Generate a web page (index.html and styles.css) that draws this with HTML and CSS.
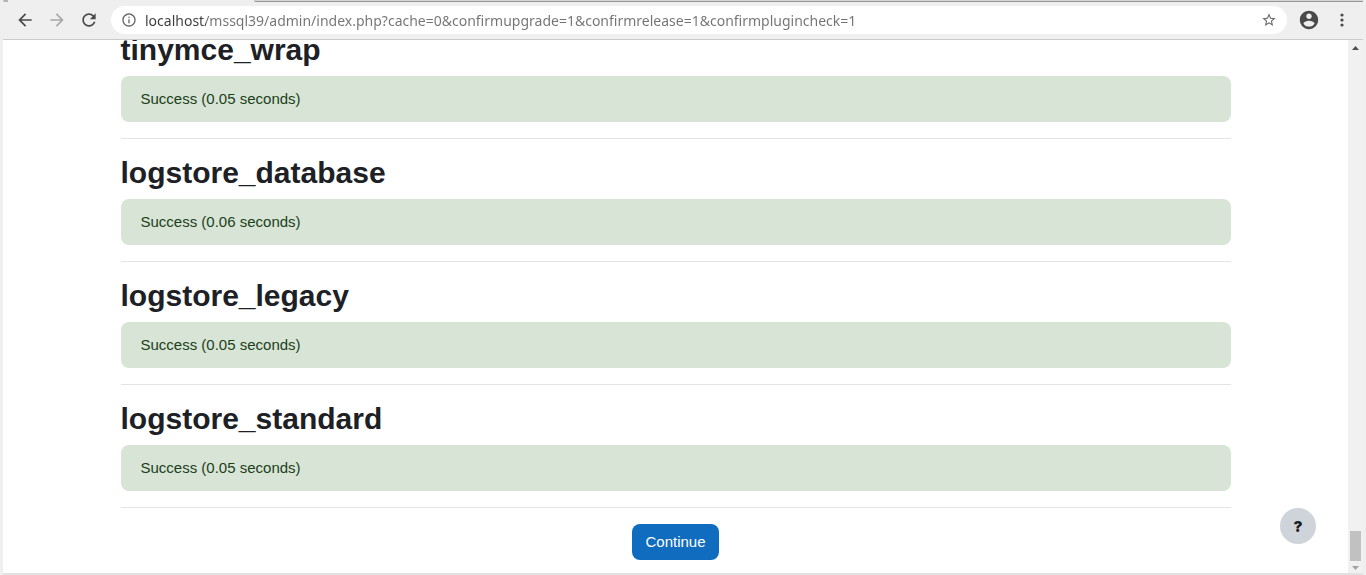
FILE: index.html
```
<!DOCTYPE html>
<html lang="en">
  <head>
    <meta charset="UTF-8" />
    <meta name="viewport" content="width=device-width, initial-scale=1.0" />
    <title>Upgrade</title>
    <link rel="stylesheet" href="styles.css">
  </head>
  <body>
    <div class="tab-strip">
      <div class="tab"></div>
      <div class="tab-rest"></div>
    </div>

    <header class="toolbar">
      <button type="button" class="nav-btn" aria-label="Back">
        <svg viewBox="0 0 24 24"><path d="M20 11H7.83l5.59-5.59L12 4l-8 8 8 8 1.41-1.41L7.83 13H20v-2z" /></svg>
      </button>
      <button type="button" class="nav-btn" aria-label="Forward" disabled>
        <svg viewBox="0 0 24 24"><path d="M12 4l-1.41 1.41L16.17 11H4v2h12.17l-5.58 5.59L12 20l8-8z" /></svg>
      </button>
      <button type="button" class="nav-btn" aria-label="Reload">
        <svg viewBox="0 0 24 24"><path d="M17.65 6.35C16.2 4.9 14.21 4 12 4c-4.42 0-7.99 3.58-7.99 8s3.57 8 7.99 8c3.73 0 6.84-2.55 7.73-6h-2.08c-.82 2.33-3.04 4-5.65 4-3.31 0-6-2.69-6-6s2.69-6 6-6c1.66 0 3.14.69 4.22 1.78L13 11h7V4l-2.35 2.35z" /></svg>
      </button>
      <div class="address-bar">
        <svg class="icon-info" viewBox="0 0 24 24"><path d="M11 17h2v-6h-2v6zm1-15C6.48 2 2 6.48 2 12s4.480 10 10 10 10-4.480 10-10S17.520 2 12 2zm0 18c-4.410 0-8-3.590-8-8s3.590-8 8-8 8 3.590 8 8-3.590 8-8 8zM11 9h2V7h-2v2z" /></svg>
        <input type="text" class="address" aria-label="Address" value="localhost/mssql39/admin/index.php?cache=0&amp;confirmupgrade=1&amp;confirmrelease=1&amp;confirmplugincheck=1" />
        <button type="button" class="star-btn" aria-label="Bookmark this page">
          <svg viewBox="0 0 24 24"><path d="M22 9.240l-7.190-.620L12 2 9.190 8.630 2 9.240l5.460 4.730L5.820 21 12 17.270 18.180 21l-1.630-7.030L22 9.240zM12 15.400l-3.760 2.270 1-4.280-3.320-2.880 4.380-.380L12 6.100l1.710 4.040 4.380.380-3.320 2.880 1 4.280L12 15.400z" /></svg>
        </button>
      </div>
      <button type="button" class="profile-btn" aria-label="Profile">
        <svg viewBox="0 0 24 24"><path d="M12 2C6.480 2 2 6.480 2 12s4.480 10 10 10 10-4.480 10-10S17.520 2 12 2zm0 3c1.660 0 3 1.340 3 3s-1.340 3-3 3-3-1.340-3-3 1.340-3 3-3zm0 14.200c-2.500 0-4.710-1.280-6-3.220.030-1.990 4-3.080 6-3.080 1.990 0 5.970 1.090 6 3.080-1.290 1.940-3.500 3.220-6 3.220z" /></svg>
      </button>
      <button type="button" class="menu-btn" aria-label="Menu">
        <svg viewBox="0 0 16 16"><circle cx="8" cy="3" r="1.600" /><circle cx="8" cy="8" r="1.600" /><circle cx="8" cy="13" r="1.600" /></svg>
      </button>
    </header>

    <div class="window">
      <main class="page">
        <div class="container">
          <section>
            <h2>tinymce_wrap</h2>
            <div class="alert">Success (0.05 seconds)</div>
          </section>
          <hr />
          <section>
            <h2>logstore_database</h2>
            <div class="alert">Success (0.06 seconds)</div>
          </section>
          <hr />
          <section>
            <h2>logstore_legacy</h2>
            <div class="alert">Success (0.05 seconds)</div>
          </section>
          <hr />
          <section>
            <h2>logstore_standard</h2>
            <div class="alert">Success (0.05 seconds)</div>
          </section>
          <hr />
          <form class="continue">
            <button type="submit" class="btn-primary">Continue</button>
          </form>
        </div>
        <button type="button" class="btn-help" aria-label="Show footer">?</button>
      </main>
      <div class="scrollbar">
        <svg class="arrow-up" viewBox="0 0 7 4"><path d="M0 4L3.500 0 7 4z" /></svg>
        <div class="thumb"></div>
        <svg class="arrow-down" viewBox="0 0 7 4"><path d="M0 0L3.500 4 7 0z" /></svg>
      </div>
    </div>
  </body>
</html>
```
FILE: styles.css
```
* {
  box-sizing: border-box;
}

body {
  margin: 0;
  height: 100vh;
  display: flex;
  flex-direction: column;
  overflow: hidden;
  background-color: #efefef;
  font-family: "Liberation Sans", Arial, sans-serif;
  font-size: 15px;
  color: #1d2125;
}

button {
  border: none;
  padding: 0;
  background: none;
  cursor: pointer;
}

svg {
  display: block;
}

/* browser bar */
.tab-strip {
  display: flex;
  height: 2px;
  padding: 0 3px;
}

.tab {
  width: 251px;
  border-left: 5px solid #b5b5b5;
  border-bottom-left-radius: 4px;
}

.tab-rest {
  flex: 1;
  background-color: #d6d6d6;
  border-bottom: 1px solid #979797;
  border-bottom-left-radius: 4px;
}

.toolbar {
  display: flex;
  align-items: center;
  height: 38px;
  margin: 0 3px;
  padding: 0 12px 1px;
  border-bottom: 1px solid #cbcbcb;
}

.nav-btn {
  width: 20px;
  height: 20px;
  margin-right: 12px;
}

.toolbar svg {
  width: 100%;
  height: 100%;
  fill: #4a4a4a;
}

.nav-btn:disabled svg {
  fill: #a8a8a8;
}

.address-bar {
  flex: 1;
  display: flex;
  align-items: center;
  height: 28px;
  padding: 0 10px;
  border-radius: 14px;
  background-color: #fff;
}

.address-bar .icon-info {
  width: 16px;
  height: 16px;
  fill: #666;
}

/* host name is darker than the rest of the address */
.address {
  flex: 1;
  min-width: 0;
  height: 28px;
  margin: 0 8px;
  padding: 0;
  border: none;
  outline: none;
  font-family: "Noto Sans", sans-serif;
  font-size: 14px;
  background: linear-gradient(to right, #3c3c3c 61px, #737373 61px);
  -webkit-background-clip: text;
  background-clip: text;
  -webkit-text-fill-color: transparent;
}

.star-btn {
  width: 16px;
  height: 16px;
}

.star-btn svg {
  fill: #666;
}

.profile-btn {
  width: 22px;
  height: 22px;
  margin-left: 11px;
}

.menu-btn {
  width: 16px;
  height: 16px;
  margin-left: 14px;
  margin-right: 1px;
}

/* page */
.window {
  flex: 1;
  min-height: 0;
  display: flex;
  margin: 0 3px;
  border-bottom: 2px solid #e2e2e2;
}

.page {
  position: relative;
  flex: 1;
  display: flex;
  flex-direction: column;
  justify-content: flex-end;
  padding: 0 16px 13px;
  overflow: hidden;
  background-color: #fff;
}

.container {
  width: 100%;
  max-width: 1110px;
  margin: 0 auto;
}

h2 {
  margin: 0 0 8px;
  font-size: 30px;
  line-height: 36px;
}

.alert {
  padding: 12px 20px;
  border-radius: 8px;
  line-height: 22px;
  color: #1c3f1a;
  background-color: #d7e4d6;
}

hr {
  margin: 16px 0;
  border: 0;
  border-top: 1px solid #e3e3e3;
}

.continue {
  text-align: center;
}

.btn-primary {
  display: block;
  margin: 0 auto;
  padding: 7px 13px;
  border-radius: 8px;
  font-family: inherit;
  font-size: 15px;
  line-height: 22px;
  color: #fff;
  background-color: #0f6cbf;
}

.btn-help {
  position: absolute;
  right: 32px;
  bottom: 29px;
  width: 36px;
  height: 36px;
  border-radius: 50%;
  font-family: Inter, sans-serif;
  font-size: 15px;
  font-weight: 900;
  color: #1d2125;
  background-color: #ced4da;
}

.scrollbar {
  display: flex;
  flex-direction: column;
  align-items: center;
  width: 15px;
  padding: 6px 0 3px;
  background-color: #f1f1f1;
}

.scrollbar svg {
  width: 7px;
  height: 4px;
}

.arrow-up {
  fill: #505050;
}

.arrow-down {
  fill: #a3a3a3;
}

.thumb {
  width: 11px;
  height: 30px;
  margin-top: auto;
  margin-bottom: 5px;
  background-color: #c1c1c1;
}
```
